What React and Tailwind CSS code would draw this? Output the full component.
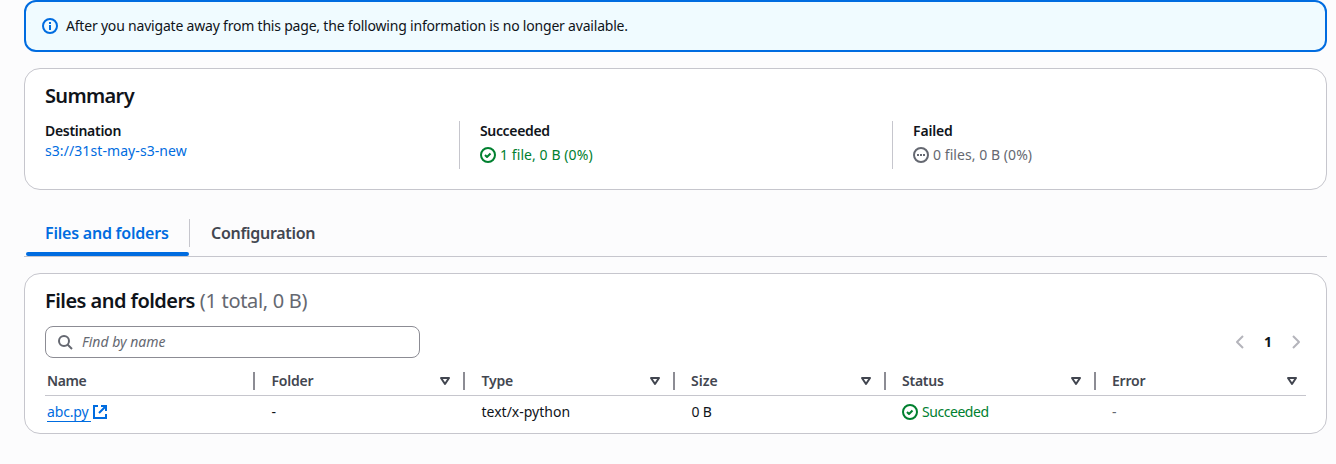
function Icon({ children, className = "" }) {
  return (
    <svg
      viewBox="0 0 16 16"
      fill="none"
      stroke="currentColor"
      strokeWidth="2"
      strokeLinejoin="round"
      className={`block size-4 shrink-0 ${className}`}
      aria-hidden="true"
    >
      {children}
    </svg>
  );
}

const InfoIcon = () => (
  <Icon className="text-[#006ce0]">
    <circle cx="8" cy="8" r="7" />
    <path d="M8 7v5M8 4v2" strokeLinejoin="miter" />
  </Icon>
);

const SuccessIcon = () => (
  <Icon>
    <circle cx="8" cy="8" r="7" />
    <path d="m5 8 2 2 3.5-3.5" />
  </Icon>
);

const PendingIcon = () => (
  <Icon>
    <circle cx="8" cy="8" r="7" />
    <path d="M4 8h2M7 8h2M10 8h2" />
  </Icon>
);

const SearchIcon = () => (
  <Icon className="text-[#656871]">
    <circle cx="7" cy="7" r="5" />
    <path d="m15 15-4.5-4.5" />
  </Icon>
);

const ExternalIcon = () => (
  <Icon>
    <path d="M9 2h5v5M7 9l7-7" strokeLinejoin="miter" />
    <path d="M14 10v4H2V2h4" strokeLinejoin="miter" />
  </Icon>
);

const SortIcon = () => (
  <Icon className="text-[#424650]">
    <path d="M4 5h8l-4 6z" />
  </Icon>
);

const COLUMNS = [
  { label: "Name", width: "w-[210px] pl-[2px]", tracking: "tracking-[-0.4px]" },
  { label: "Folder", width: "w-[210px] pl-[16.5px]", tracking: "tracking-[-0.2px]", sort: true },
  { label: "Type", width: "w-[210px] pl-[16.5px]", tracking: "tracking-[-0.2px]", sort: true },
  { label: "Size", width: "w-[211px] pl-[16px]", tracking: "tracking-normal", sort: true },
  { label: "Status", width: "w-[210px] pl-[16px]", tracking: "tracking-[-0.25px]", sort: true },
  { label: "Error", width: "w-[210px] pl-[16px]", tracking: "tracking-[-0.2px]", sort: true, last: true },
];

function HeaderCell({ label, width, tracking, sort, last }) {
  return (
    <div
      className={`flex h-[18px] shrink-0 items-center justify-between font-semibold text-[#424650] ${width} ${
        last ? "pr-[6px]" : "border-r-2 border-[#8c8c94] pr-[10px]"
      }`}
    >
      <span className={tracking}>{label}</span>
      {sort && <SortIcon />}
    </div>
  );
}

export default function App() {
  return (
    <div className="h-[464px] w-[1336px] overflow-hidden bg-[#fcfcfd] pr-[9px] pl-6 font-['Noto_Sans','Open_Sans',sans-serif] text-[14px] leading-5 text-[#0f141a]">
      <div className="flex h-[52px] items-center gap-2 rounded-xl border-2 border-[#006ce0] bg-[#f0fbff] px-4">
        <InfoIcon />
        <span className="tracking-[-0.2px]">
          After you navigate away from this page, the following information is no longer available.
        </span>
      </div>

      <section className="mt-4 h-[122px] rounded-2xl border border-[#c6c6cd] bg-white px-5 pt-[15px]">
        <h2 className="text-[20px] leading-6 font-semibold tracking-[-0.65px]">Summary</h2>
        <div className="mt-[13px] flex h-12">
          <div className="w-[414px]">
            <div className="font-semibold tracking-[-0.3px]">Destination</div>
            <a className="block tracking-[0.08px] text-[#006ce0]">s3://31st-may-s3-new</a>
          </div>
          <div className="w-[433px] border-l border-[#c6c6cd] pl-5">
            <div className="font-semibold tracking-[-0.35px]">Succeeded</div>
            <div className="mt-1 flex items-center gap-1 text-[#00802f]">
              <SuccessIcon />
              <span className="tracking-[0.08px]">1 file, 0 B (0%)</span>
            </div>
          </div>
          <div className="flex-1 border-l border-[#c6c6cd] pl-5">
            <div className="font-semibold tracking-[-0.15px]">Failed</div>
            <div className="mt-1 flex items-center gap-1 text-[#656871]">
              <PendingIcon />
              <span className="tracking-[0.06px]">0 files, 0 B (0%)</span>
            </div>
          </div>
        </div>
      </section>

      <nav className="mt-[29px] flex h-[38px] border-b border-[#c6c6cd] text-[16px] font-semibold">
        <div className="ml-[2px] flex w-[163px] flex-col justify-between pt-1 text-[#006ce0]">
          <span className="pl-[19px] tracking-[-0.22px]">Files and folders</span>
          <span className="h-1 rounded-[2px] bg-[#006ce0]" />
        </div>
        <div className="h-7 border-l border-[#c6c6cd] pt-1 pl-[21px] tracking-[-0.3px] text-[#424650]">
          Configuration
        </div>
      </nav>

      <section className="mt-4 h-[161px] rounded-2xl border border-[#c6c6cd] bg-white px-5 pt-[15px]">
        <h2 className="flex gap-[5px] text-[20px] leading-6">
          <span className="font-semibold tracking-[-0.55px]">Files and folders</span>
          <span className="tracking-[-0.32px] text-[#656871]">(1 total, 0 B)</span>
        </h2>
        <div className="mt-[13px] flex items-center justify-between">
          <div className="flex h-8 w-[375px] items-center gap-[9px] rounded-lg border border-[#8c8c94] px-[11px] text-[#656871] italic">
            <SearchIcon />
            <span>Find by name</span>
          </div>
          <div className="flex items-center gap-4 pr-[2px] text-[#b4b4bb]">
            <Icon><path d="m11 2-6 6 6 6" /></Icon>
            <span className="font-bold text-[#0f141a]">1</span>
            <Icon><path d="m5 2 6 6-6 6" /></Icon>
          </div>
        </div>
        <div className="flex h-[38px] items-center border-b border-[#c6c6cd] pt-[9px]">
          {COLUMNS.map((column) => (
            <HeaderCell key={column.label} {...column} />
          ))}
        </div>
        <div className="flex pt-[6px]">
          <div className="flex w-[210px] items-center gap-px pl-[2px] text-[#006ce0]">
            <span className="h-5 w-[44px] border-b border-[#006ce0] tracking-[-0.15px]">abc.py</span>
            <ExternalIcon />
          </div>
          <div className="w-[210px] pl-[16.5px]">-</div>
          <div className="w-[210px] pl-[16.5px]">text/x-python</div>
          <div className="w-[211px] pl-[16.5px] tracking-[-0.15px]">0 B</div>
          <div className="flex w-[210px] items-center gap-1 pl-[16px] text-[#00802f]">
            <SuccessIcon />
            <span className="tracking-[-0.45px]">Succeeded</span>
          </div>
          <div className="w-[210px] pl-[16px] text-[#656871]">-</div>
        </div>
      </section>
    </div>
  );
}
